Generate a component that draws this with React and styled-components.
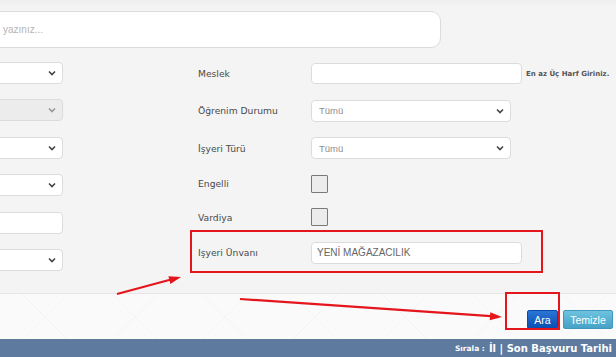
import React from 'react';
import styled, {createGlobalStyle, css} from 'styled-components';

const GlobalStyle = createGlobalStyle`
  html, body {
    margin: 0;
    padding: 0;
    background: #f4f4f4;
    font-family: "DejaVu Sans", Verdana, sans-serif;
  }
`;

const fieldBase = css`
  box-sizing: border-box;
  background: ${(p) => (p.$disabled ? '#ececec' : '#fff')};
  border: 1px solid #dcdcdc;
  border-radius: 4px;
`;

const Page = styled.div`
  position: relative;
  width: 616px;
  height: 357px;
  overflow: hidden;
  background: #f4f4f4;
`;

const Content = styled.div`
  height: 293px;
  display: flex;
  flex-direction: column;
  background: linear-gradient(#efefef 0, #f4f4f4 6px);
`;

const SearchRow = styled.div`
  padding-top: 11px;
`;

const SearchBox = styled.div`
  box-sizing: border-box;
  margin-left: -20px;
  width: 461px;
  height: 37px;
  background: #fff;
  border: 1px solid #dcdcdc;
  border-radius: 10px;
  display: flex;
  align-items: center;
  padding-left: 22px;
  font-family: "Liberation Sans", Arial, sans-serif;
  font-size: 10px;
  color: #b4b4b4;
`;

const Form = styled.div`
  display: flex;
  margin-top: 14px;
`;

const LeftColumn = styled.div`
  display: flex;
  flex-direction: column;
  gap: 15.4px;
  margin-left: -40px;
  width: 103px;
`;

const RightColumn = styled.div`
  display: flex;
  flex-direction: column;
  gap: 15.5px;
  margin-left: 135px;
  padding-top: 1px;
`;

const Row = styled.div`
  display: grid;
  grid-template-columns: 113px auto auto;
  align-items: center;
  justify-content: start;
`;

const Label = styled.div`
  font-size: 9.2px;
  color: #4a4a4a;
`;

const TextInput = styled.div`
  ${fieldBase};
  width: ${(p) => p.$width}px;
  height: ${(p) => p.$height || 22}px;
  display: flex;
  align-items: center;
  padding-left: 5px;
  font-family: "Liberation Sans", Arial, sans-serif;
  font-size: 10px;
  color: #666;
`;

const SelectBox = styled.div`
  ${fieldBase};
  width: ${(p) => p.$width}px;
  height: 22px;
  display: flex;
  align-items: center;
  justify-content: space-between;
  padding: 0 6px 0 7px;
  font-family: "Liberation Sans", Arial, sans-serif;
  font-size: 9.5px;
  color: #8f8f8f;
  svg {
    opacity: ${(p) => (p.$disabled ? 0.5 : 1)};
  }
`;

const Hint = styled.div`
  margin-left: 4px;
  font-size: 7px;
  font-weight: bold;
  color: #555;
`;

const Checkbox = styled.div`
  box-sizing: border-box;
  width: 17px;
  height: 18px;
  border: 1.5px solid #7a7a7a;
  background: #ececec;
  border-radius: 1px;
`;

const Footer = styled.div`
  box-sizing: border-box;
  height: 46px;
  border-top: 1px solid #e6e6e6;
  background:
    linear-gradient(135deg, transparent 49.6%, rgba(0,0,0,0.022) 50%, transparent 50.4%) 0 0 / 90px 46px,
    linear-gradient(45deg, transparent 49.6%, rgba(0,0,0,0.022) 50%, transparent 50.4%) 0 0 / 90px 46px,
    #fafafa;
  display: flex;
  justify-content: flex-end;
  align-items: flex-end;
  gap: 5px;
  padding: 0 3px 10px 0;
`;

const Button = styled.div`
  box-sizing: border-box;
  height: 19px;
  width: ${(p) => p.$width}px;
  display: flex;
  align-items: center;
  justify-content: center;
  font-family: "Liberation Sans", Arial, sans-serif;
  font-size: 10.5px;
  color: #fff;
  border-radius: 2px;
  background: ${(p) =>
    p.$primary ? 'linear-gradient(#2a76d6, #0a4eb2)' : 'linear-gradient(#6ec2df, #46a2c6)'};
  border: 1px solid ${(p) => (p.$primary ? '#0b4aa8' : '#3f97bb')};
`;

const Bar = styled.div`
  height: 18px;
  background: #5e7a9f;
  display: flex;
  justify-content: flex-end;
  align-items: center;
  padding-right: 4px;
  color: #fff;
  font-weight: bold;
  white-space: nowrap;
`;

const BarLabel = styled.span`
  font-size: 7.5px;
  margin-right: 4px;
`;

const BarValue = styled.span`
  font-size: 10px;
`;

const Overlay = styled.svg`
  position: absolute;
  left: 0;
  top: 0;
  pointer-events: none;
`;

const Chevron = () => (
  <svg width="8" height="6" viewBox="0 0 8 6">
    <path d="M1 1.5 L4 4.5 L7 1.5" fill="none" stroke="#444" strokeWidth="1.6" />
  </svg>
);

const Select = ({width, text, disabled}) => (
  <SelectBox $width={width} $disabled={disabled}>
    <span>{text}</span>
    <Chevron />
  </SelectBox>
);

const RED = '#e5151c';

const App = () => (
  <Page>
    <GlobalStyle />
    <Content>
      <SearchRow>
        <SearchBox>yazınız...</SearchBox>
      </SearchRow>
      <Form>
        <LeftColumn>
          <Select width={103} />
          <Select width={103} disabled />
          <Select width={103} />
          <Select width={103} />
          <TextInput $width={103} />
          <Select width={103} />
        </LeftColumn>
        <RightColumn>
          <Row>
            <Label>Meslek</Label>
            <TextInput $width={211} $height={21} />
            <Hint>En az Üç Harf Giriniz.</Hint>
          </Row>
          <Row>
            <Label>Öğrenim Durumu</Label>
            <Select width={200} text="Tümü" />
          </Row>
          <Row>
            <Label>İşyeri Türü</Label>
            <Select width={200} text="Tümü" />
          </Row>
          <Row>
            <Label>Engelli</Label>
            <Checkbox />
          </Row>
          <Row>
            <Label>Vardiya</Label>
            <Checkbox />
          </Row>
          <Row>
            <Label>Işyeri Ünvanı</Label>
            <TextInput $width={211}>YENİ MAĞAZACILIK</TextInput>
          </Row>
        </RightColumn>
      </Form>
    </Content>
    <Footer>
      <Button $primary $width={31}>Ara</Button>
      <Button $width={50}>Temizle</Button>
    </Footer>
    <Bar>
      <BarLabel>Sırala :</BarLabel>
      <BarValue>İl | Son Başvuru Tarihi</BarValue>
    </Bar>

    <Overlay width="616" height="357" viewBox="0 0 616 357">
      <rect x="191" y="231" width="351" height="41" fill="none" stroke={RED} strokeWidth="2" />
      <rect x="506" y="293" width="53" height="36" fill="none" stroke={RED} strokeWidth="2" />
      <line x1="117" y1="294" x2="171" y2="279.5" stroke={RED} strokeWidth="2.2" />
      <polygon points="181,277 170.4,284 168.4,276.2" fill={RED} />
      <line x1="240" y1="299" x2="491" y2="316.2" stroke={RED} strokeWidth="2.2" />
      <polygon points="502,317 490.3,312.2 489.7,320.2" fill={RED} />
    </Overlay>
  </Page>
);

export default App;
